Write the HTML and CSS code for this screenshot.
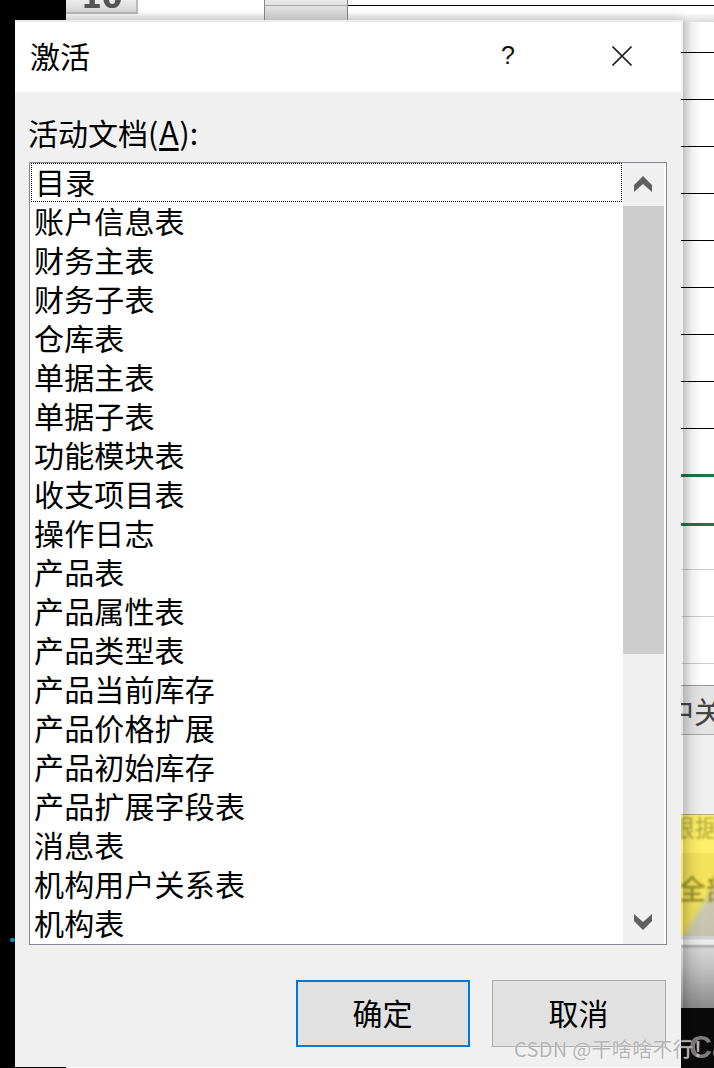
FILE: index.html
```html
<!DOCTYPE html>
<html lang="zh-CN">
<head>
<meta charset="utf-8">
<title>激活</title>
<link rel="stylesheet" href="styles.css">
</head>
<body>
<div class="desktop">
  <div class="sheet-top">
    <span class="cell-a"><b class="cell-num">10</b></span>
    <span class="cell-b"><i class="cell-rule"></i><i class="cell-mark"></i></span>
    <span class="cell-c"></span>
  </div>
</div>
<i class="blue-dot"></i>
<section class="dialog">
  <header class="title-bar">
    <h1 class="title">激活</h1>
    <span class="help">?</span>
    <svg class="close" viewBox="0 0 20 20" aria-label="关闭"><path d="M0.5 0.5 L19.5 19.5 M19.5 0.5 L0.5 19.5"/></svg>
  </header>
  <div class="content">
    <label class="list-label">活动文档(<u>A</u>):</label>
    <div class="listbox">
      <ul class="items">
        <li class="focused">目录</li>
        <li>账户信息表</li>
        <li>财务主表</li>
        <li>财务子表</li>
        <li>仓库表</li>
        <li>单据主表</li>
        <li>单据子表</li>
        <li>功能模块表</li>
        <li>收支项目表</li>
        <li>操作日志</li>
        <li>产品表</li>
        <li>产品属性表</li>
        <li>产品类型表</li>
        <li>产品当前库存</li>
        <li>产品价格扩展</li>
        <li>产品初始库存</li>
        <li>产品扩展字段表</li>
        <li>消息表</li>
        <li>机构用户关系表</li>
        <li>机构表</li>
      </ul>
      <div class="scrollbar">
        <svg class="arrow" viewBox="0 0 18 16"><path d="M9 0 L18 9 L18 16 L9 8 L0 16 L0 9 Z"/></svg>
        <div class="track"><div class="thumb"></div></div>
        <svg class="arrow" viewBox="0 0 18 16"><path d="M0 0 L9 8 L18 0 L18 7 L9 16 L0 7 Z"/></svg>
      </div>
    </div>
    <div class="actions">
      <button class="btn primary">确定</button>
      <button class="btn">取消</button>
    </div>
  </div>
</section>
<div class="sheet-side">
  <div class="row black"></div><div class="row black"></div><div class="row black"></div>
  <div class="row black"></div><div class="row black"></div><div class="row black"></div>
  <div class="row black"></div><div class="row black"></div><div class="row black"></div>
  <div class="row green first-green"></div><div class="row green second-green"></div>
  <div class="row gray"></div><div class="row gray"></div><div class="row gray"></div>
  <div class="side-cell">中关</div>
  <div class="side-light"></div>
  <div class="side-yellow"><span class="y1">根据</span><span class="y2">全部</span></div>
  <div class="side-steel"></div>
  <div class="side-dark">Ca</div>
</div>
<div class="watermark">CSDN @干啥啥不行！</div>
</body>
</html>
```

FILE: styles.css
```css
* { box-sizing: border-box; }
html, body { margin: 0; padding: 0; }
body {
  position: relative;
  width: 714px;
  height: 1068px;
  overflow: hidden;
  background: #000;
  font-family: "Noto Sans CJK SC", "Liberation Sans", sans-serif;
  color: #000;
}
.desktop { position: absolute; inset: 0 0 0 66px; background: #fff; }
.sheet-top { display: flex; height: 22px; background: linear-gradient(#fff 0, #fff 12px, #dcdcdc 22px); }
.cell-a {
  width: 72px; height: 14px; padding-left: 15px;
  background: linear-gradient(#ececec, #d6d6d6); border-right: 2px solid #b8b8b8; border-bottom: 2px solid #b8b8b8;
  overflow: hidden;
}
.cell-num { display: block; margin-top: -10px; font: 700 30px/16px "DejaVu Sans", sans-serif; color: #555; filter: blur(.5px); }
.cell-b { position: relative; margin-left: 126px; width: 84px; height: 22px; background: linear-gradient(#e8e8e8, #d0d0d0); border-left: 1px solid #888; border-right: 1px solid #888; }
.cell-rule { display: block; height: 1px; margin-top: 5px; background: #aaa; }
.cell-mark { position: absolute; left: 44px; top: 20px; width: 2px; height: 2px; background: #222; }
.cell-c { flex: 1; height: 22px; }
.cell-c::before { content: ""; display: block; height: 1px; margin-top: 5px; background: #000; }

.sheet-side { position: absolute; left: 681px; top: 0; right: 0; bottom: 0; display: flex; flex-direction: column; padding-top: 52px; }
.sheet-side::after {
  content: ""; position: absolute; left: 2px; top: 22px; bottom: 0; width: 20px;
  background: linear-gradient(to right, rgba(0,0,0,.2), rgba(0,0,0,.06) 45%, rgba(0,0,0,0));
}
.row { height: 47px; border-top: 1px solid #000; flex: none; }
.row.green { border-top: 3px solid #217346; }
.row.first-green { height: 49px; margin-top: -1px; }
.row.second-green { height: 46px; }
.row.gray { border-top: 1px solid #ccc; }
.side-cell {
  flex: none; height: 50px; margin-top: -25px; padding-top: 3px;
  background: #e4e4e4; border-top: 1px solid #999; border-bottom: 1px solid #aaa;
  font-size: 30px; line-height: 42px; color: #444; white-space: nowrap; overflow: hidden; text-indent: -17px;
}
.side-light { flex: none; height: 79px; background: #f0f0f0; }
.side-yellow {
  flex: none; height: 122px; overflow: hidden;
  border-top: 1px solid #b8b060;
  background:
    linear-gradient(to bottom, transparent 38px, rgba(170,150,0,.14) 38px),
    linear-gradient(121deg, #fff06a 0, #fff06a 66%, #cfcfcf 76%, #c8c8c8 100%);
  color: #9a9228;
}
.y1, .y2 { display: block; white-space: nowrap; overflow: hidden; filter: blur(.8px); }
.y1 { font-size: 24px; line-height: 24px; text-indent: -10px; color: #b0a63a; }
.y2 { font-size: 28px; line-height: 34px; margin-top: 32px; text-indent: -3px; font-weight: 500; }
.side-steel {
  flex: none; height: 72px;
  background: linear-gradient(#d2d2d2 0, #d2d2d2 3px, #ececec 4px, #ececec 8px, #a8a8a8 10px, #d4d4d4 13px, #c4c4c4 30px, #8a8a8a 72px);
}
.side-dark {
  flex: 1; padding: 22px 0 0 8px; background: #0a0a0a;
  color: #7c7c7c; font: 700 32px/34px "Liberation Sans", sans-serif; white-space: nowrap; filter: blur(.6px);
}
.blue-dot { position: absolute; left: 10px; top: 938px; width: 5px; height: 4px; border-radius: 2px; background: #0c8fc7; }

.dialog {
  position: absolute; left: 15px; top: 22px; width: 668px; height: 1045px;
  display: flex; flex-direction: column;
  background: #f0f0f0;
  box-shadow: 0 -2px 0 #ececec, 0 -6px 10px rgba(0,0,0,.1);
}
.title-bar { flex: none; position: relative; height: 70px; margin-right: 2px; background: #fff; padding-left: 16px; }
.title { margin: 0; font-size: 30px; font-weight: 400; line-height: 70px; position: relative; top: -2px; left: -1px; }
.help { position: absolute; left: 486px; top: 21px; font: 400 25px/25px "Liberation Sans", sans-serif; color: #111; }
.close { position: absolute; left: 597px; top: 24px; width: 20px; height: 20px; }
.close path { stroke: #222; stroke-width: 1.6; fill: none; }
.content { flex: 1; display: flex; flex-direction: column; padding: 0 16px 0 14px; }
.list-label { display: block; height: 70px; font-size: 30px; line-height: 40px; padding-top: 19px; white-space: nowrap; text-indent: -1px; }
.list-label u { font-size: 32px; text-underline-offset: 3px; margin: 0 1px; }
.listbox { display: flex; height: 783px; background: #fff; border: 1px solid #828790; }
.items { list-style: none; margin: 0; padding: 0 1px; width: 593px; flex: none; overflow: hidden; }
.items li { height: 39px; font-size: 30px; line-height: 37px; padding-left: 3px; letter-spacing: .15px; white-space: nowrap; }
.items li.focused { outline: 1px dotted #000; outline-offset: -1px; padding-left: 4px; }
.scrollbar { width: 41px; margin-right: 2px; display: flex; flex-direction: column; align-items: center; background: #f0f0f0; height: 781px; }
.arrow { flex: none; width: 18px; height: 16px; fill: #606060; margin: 13px 2px 14px 0; }
.track { flex: 1; width: 100%; }
.thumb { height: 448px; background: #cdcdcd; }
.actions { display: flex; gap: 22px; padding: 35px 0 0 267px; }
.btn {
  width: 174px; height: 67px; padding: 0 1px 4px 0;
  font-family: inherit; font-size: 30px; color: #000;
  background: #e1e1e1; border: 1px solid #adadad; border-radius: 0;
}
.btn.primary { border: 2px solid #0078d7; }
.watermark {
  position: absolute; left: 514px; top: 1035px;
  font-size: 20px; line-height: 28px;
  color: rgba(170,170,170,.9); text-shadow: 0 0 1px #fff; white-space: nowrap; letter-spacing: 0.3px;
}
```
